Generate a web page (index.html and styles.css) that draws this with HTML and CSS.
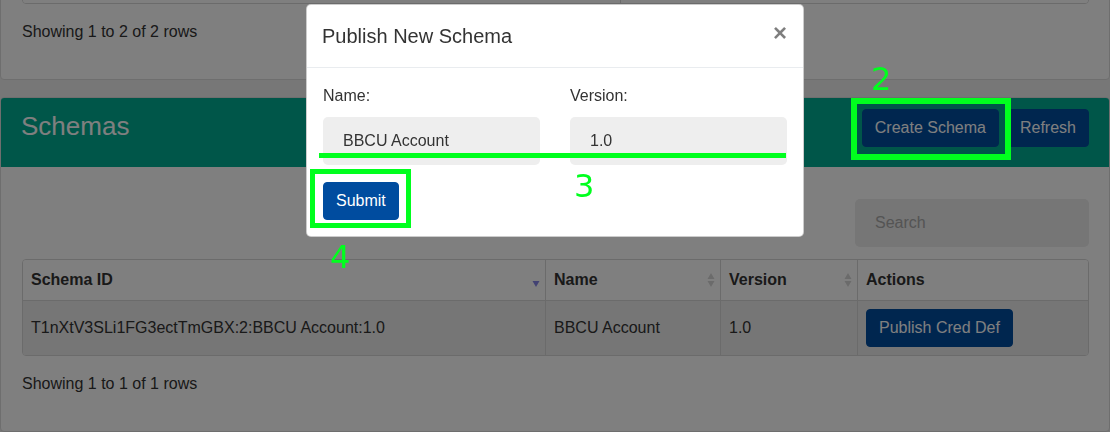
FILE: index.html
```html
<!DOCTYPE html>
<html lang="en">
<head>
<meta charset="utf-8">
<title>Schemas</title>
<link rel="stylesheet" href="styles.css">
</head>
<body>
<div class="page">
  <section class="card card-top">
    <div class="card-body card-body-top">
      <div class="tbl">
        <table>
          <tbody>
            <tr class="tall"><td class="c-first"></td><td></td></tr>
          </tbody>
        </table>
      </div>
      <div class="pagination-detail">Showing 1 to 2 of 2 rows</div>
    </div>
  </section>

  <section class="card">
    <header class="card-header">
      <h2 class="card-title">Schemas</h2>
      <div class="btns">
        <button class="btn">Create Schema</button>
        <button class="btn">Refresh</button>
      </div>
    </header>
    <div class="card-body">
      <div class="toolbar">
        <input class="search" type="text" placeholder="Search">
      </div>
      <div class="tbl">
        <table>
          <thead>
            <tr>
              <th class="c-id"><div class="th-inner"><span>Schema ID</span>
                <svg class="sort" width="8" height="16" viewBox="0 0 8 16"><polygon points="0.5,9 7.5,9 4,15" fill="#8585e6"/></svg></div></th>
              <th class="c-name"><div class="th-inner"><span>Name</span>
                <svg class="sort" width="8" height="16" viewBox="0 0 8 16"><polygon points="0.5,7 4,1 7.5,7" fill="#d6d6d6"/><polygon points="0.5,9 7.5,9 4,15" fill="#d6d6d6"/></svg></div></th>
              <th class="c-ver"><div class="th-inner"><span>Version</span>
                <svg class="sort" width="8" height="16" viewBox="0 0 8 16"><polygon points="0.5,7 4,1 7.5,7" fill="#d6d6d6"/><polygon points="0.5,9 7.5,9 4,15" fill="#d6d6d6"/></svg></div></th>
              <th class="c-act"><div class="th-inner"><span>Actions</span></div></th>
            </tr>
          </thead>
          <tbody>
            <tr>
              <td>T1nXtV3SLi1FG3ectTmGBX:2:BBCU Account:1.0</td>
              <td>BBCU Account</td>
              <td>1.0</td>
              <td><button class="btn btn-cell">Publish Cred Def</button></td>
            </tr>
          </tbody>
        </table>
      </div>
      <div class="pagination-detail">Showing 1 to 1 of 1 rows</div>
    </div>
  </section>
</div>

<div class="backdrop"></div>

<div class="modal">
  <div class="dialog">
    <div class="m-header">
      <h5 class="m-title">Publish New Schema</h5>
      <button class="close" aria-label="Close">×</button>
    </div>
    <div class="m-body">
      <div class="form-row">
        <div class="form-group">
          <label>Name:</label>
          <input class="m-input" type="text" value="BBCU Account">
        </div>
        <div class="form-group">
          <label>Version:</label>
          <input class="m-input" type="text" value="1.0">
        </div>
      </div>
      <button class="btn">Submit</button>
    </div>
  </div>
</div>

<div class="ann ann-box ann-box-2"></div>
<div class="ann ann-num ann-num-2">2</div>
<div class="ann ann-line"></div>
<div class="ann ann-num ann-num-3">3</div>
<div class="ann ann-box ann-box-4"></div>
<div class="ann ann-num ann-num-4">4</div>
</body>
</html>
```

FILE: styles.css
```css
* { box-sizing: border-box; }

html {
  background: #eeeeee;
  overflow: hidden;
}

body {
  margin: 0;
  font-family: "Liberation Sans", Arial, sans-serif;
  font-size: 16px;
  line-height: 24px;
  color: #333;
}

.page {
  padding: 0;
}

.card {
  background: #fff;
  border: 1px solid #dcdcdc;
  border-radius: 4px;
  overflow: hidden;
}

.card-top {
  margin-top: -39px;
}

.card + .card {
  margin-top: 17px;
}

.card-header {
  display: flex;
  justify-content: space-between;
  align-items: flex-start;
  height: 69px;
  padding: 11px 20px 0 20px;
  background: #00ad93;
}

.card-title {
  margin: 1px 0 0;
  font-size: 26px;
  line-height: 32px;
  font-weight: 400;
  color: #fff;
}

.btns {
  display: flex;
  gap: 8px;
}

.btn {
  font-family: "Liberation Sans", Arial, sans-serif;
  font-size: 16px;
  line-height: 24px;
  padding: 6px 12px;
  border: 1px solid #004c9f;
  background: #004c9f;
  color: #fff;
  border-radius: 4px;
  cursor: pointer;
}

.card-body {
  padding: 32px 20px 35px 21px;
}

.card-body-top {
  padding-top: 0;
}

.toolbar {
  display: flex;
  justify-content: flex-end;
  margin-bottom: 12px;
}

.search {
  width: 234px;
  height: 48px;
  border: 0;
  border-radius: 5px;
  background: #ececec;
  padding: 0 20px;
  font-family: "Liberation Sans", Arial, sans-serif;
  font-size: 16px;
  color: #333;
}

.search::placeholder {
  color: #a9a9a9;
  opacity: 1;
}

.tbl {
  border: 1px solid #d6d6d6;
  border-radius: 4px;
  overflow: hidden;
}

table {
  width: 100%;
  border-collapse: separate;
  border-spacing: 0;
  table-layout: fixed;
}

th {
  text-align: left;
  font-weight: 700;
  padding: 8px 5px 8px 8px;
  background: #fff;
}

th + th,
td + td {
  border-left: 1px solid #d6d6d6;
}

td {
  border-top: 1px solid #d6d6d6;
  padding: 8px;
  vertical-align: middle;
  background: #ececec;
  white-space: nowrap;
}

.tall td {
  height: 40px;
  border-top: 0;
  background: #fff;
}

.c-first { width: 597px; }

.c-id { width: 522px; }
.c-name { width: 175px; }
.c-ver { width: 137px; }

.th-inner {
  display: flex;
  justify-content: space-between;
  align-items: center;
}

.sort {
  display: block;
  flex: none;
}

.btn-cell {
  display: inline-block;
  vertical-align: top;
}

.pagination-detail {
  margin-top: 16px;
}

/* modal */
.backdrop {
  position: fixed;
  inset: 0;
  background: rgba(0, 0, 0, 0.5);
}

.modal {
  position: fixed;
  top: 4px;
  left: 0;
  right: 0;
  display: flex;
  justify-content: center;
}

.dialog {
  width: 498px;
  background: #fff;
  border: 1px solid rgba(0, 0, 0, 0.2);
  border-radius: 5px;
}

.m-header {
  display: flex;
  align-items: flex-start;
  padding: 16px 16px 16px 15px;
  border-bottom: 1px solid #e9ecef;
}

.m-title {
  margin: 0;
  font-size: 20px;
  line-height: 30px;
  font-weight: 400;
}

.close {
  padding: 16px;
  margin: -16px -16px -16px auto;
  background: none;
  border: 0;
  font-family: "Liberation Sans", Arial, sans-serif;
  font-size: 24px;
  line-height: 1;
  font-weight: 700;
  color: #000;
  opacity: 0.5;
}

.m-body {
  padding: 16px;
}

.form-row {
  display: grid;
  grid-template-columns: 1fr 1fr;
  column-gap: 30px;
  margin-bottom: 17px;
}

.form-group label {
  display: block;
  margin-bottom: 9px;
}

.m-input {
  display: block;
  width: 100%;
  height: 48px;
  border: 0;
  border-radius: 5px;
  background: #eeeeee;
  padding: 0 20px;
  font-family: "Liberation Sans", Arial, sans-serif;
  font-size: 16px;
  color: #333;
}

/* annotations drawn over the screenshot */
.ann {
  position: absolute;
}

.ann-box {
  border-style: solid;
  border-color: #00ff1e;
}

.ann-box-2 {
  left: 851px;
  top: 98px;
  width: 160px;
  height: 62px;
  border-width: 6px;
}

.ann-box-4 {
  left: 310px;
  top: 169px;
  width: 101px;
  height: 59px;
  border-width: 5px;
}

.ann-line {
  left: 319px;
  top: 153px;
  width: 467px;
  height: 5px;
  background: #00ff1e;
}

.ann-num {
  font-family: "DejaVu Sans", sans-serif;
  font-size: 32px;
  line-height: 32px;
  color: #00ff1e;
}

.ann-num-2 { left: 871px; top: 63px; }
.ann-num-3 { left: 574px; top: 170px; }
.ann-num-4 { left: 330px; top: 241px; }
```
